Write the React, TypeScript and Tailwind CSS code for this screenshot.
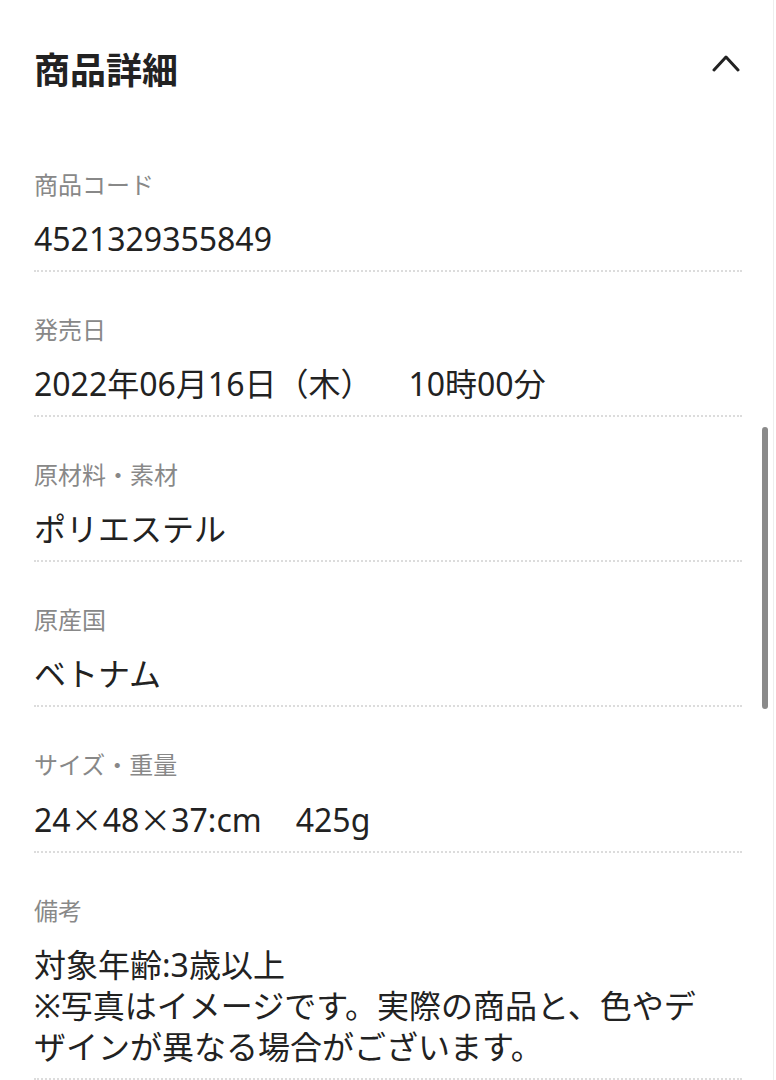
import React from "react";

const X = () => <span style={{ fontFamily: '"Noto Sans CJK JP", sans-serif' }}>×</span>;

const items: { label: string; value: React.ReactNode }[] = [
  { label: "商品コード", value: "4521329355849" },
  {
    label: "発売日",
    value: (
      <>
        2022年06月16日（木）<span className="inline-block w-[36px]" />10時00分
      </>
    ),
  },
  { label: "原材料・素材", value: "ポリエステル" },
  { label: "原産国", value: "ベトナム" },
  {
    label: "サイズ・重量",
    value: (
      <>
        24<X />48<X />37:cm<span className="inline-block w-[34px]" />425g
      </>
    ),
  },
  {
    label: "備考",
    value: (
      <>
        対象年齢:3歳以上
        <br />
        ※写真はイメージです。実際の商品と、色やデザインが異なる場合がございます。
      </>
    ),
  },
];

export default function App() {
  return (
    <div
      className="relative w-[776px] h-[1080px] overflow-hidden bg-white text-[#222]"
      style={{ fontFamily: '"Noto Sans CJK JP", "Noto Sans", sans-serif' }}
    >
      <div className="px-[34px] pt-[44px]">
        <div className="flex items-center justify-between h-[48px] mb-[35px]">
          <h2 className="text-[36px] leading-[48px] font-bold">商品詳細</h2>
          <svg width="28" height="18" viewBox="0 0 28 18" className="mr-[2px] -mt-[10px]">
            <polyline points="2,16 14,3 26,16" fill="none" stroke="#222" strokeWidth="3" strokeLinecap="round" strokeLinejoin="round" />
          </svg>
        </div>
        {items.map((it) => (
          <div key={it.label} className="pt-[41px] pb-[11px] border-b-2 border-dotted border-[#dcdcdc]">
            <div className="text-[24px] leading-[32px] text-[#888]">{it.label}</div>
            <div
              className="mt-[18px] w-[690px] text-[32px] leading-[41px]"
              style={{ fontFamily: '"Noto Sans", "Noto Sans CJK JP", sans-serif' }}
            >
              {it.value}
            </div>
          </div>
        ))}
      </div>
      <div className="absolute right-[8px] top-[427px] w-[6px] h-[282px] rounded-full bg-[#8a8a8a]" />
      <div className="absolute right-[2px] top-0 w-px h-full bg-[#eee]" />
    </div>
  );
}
